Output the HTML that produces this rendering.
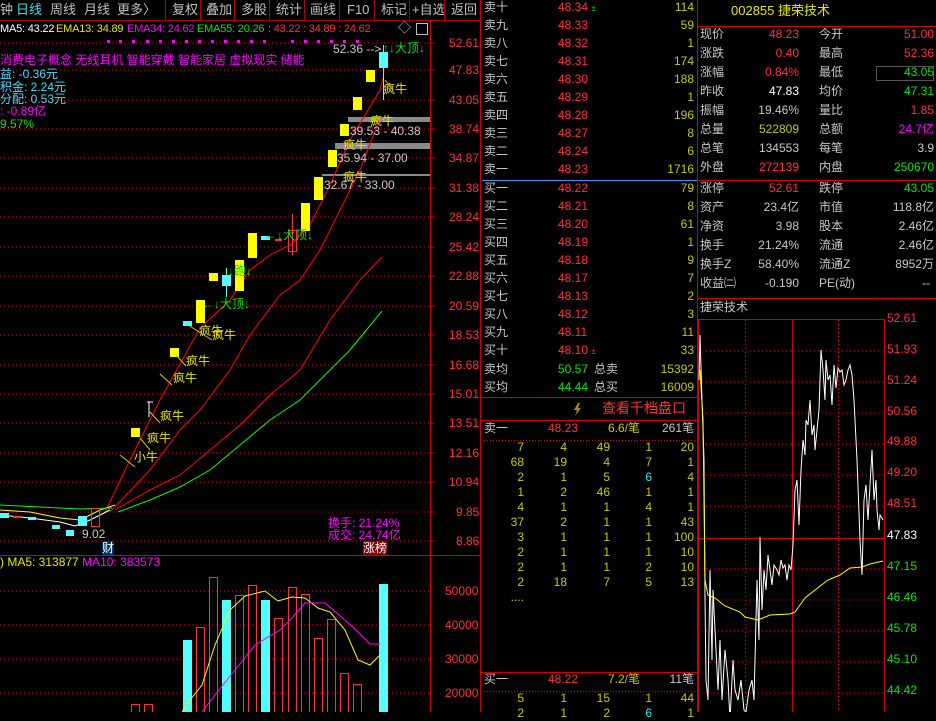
<!DOCTYPE html>
<html><head><meta charset="utf-8"><style>
*{margin:0;padding:0}
body{width:936px;height:712px;background:#000;overflow:hidden;position:relative;font-family:"Liberation Sans","Noto Sans CJK SC",sans-serif;font-size:12px}
.a{position:absolute;white-space:nowrap;line-height:14px}
.r{color:#ff3232}.y{color:#e6e600}.w{color:#c8c8c8}.g{color:#00e600}.c{color:#40e0ff}.m{color:#ff00ff}.yl{color:#c8c800}
.tb{position:absolute;top:0;height:20px;line-height:20px;color:#c0c0c0;font-size:13px}
.sep{position:absolute;top:0;width:1px;height:20px;background:#a00}
.rt{text-align:right}
.ma{position:absolute;top:22px;line-height:14px;white-space:nowrap;font-size:11px;letter-spacing:-0.2px}
</style></head><body>
<div class="tb" style="left:0">钟</div>
<div class="tb c" style="left:16px;color:#40e0e0">日线</div>
<div class="tb" style="left:50px">周线</div>
<div class="tb" style="left:84px">月线</div>
<div class="tb" style="left:117px">更多〉</div>
<div class="sep" style="left:165px"></div>
<div class="tb" style="left:172px">复权</div><div class="sep" style="left:200px"></div>
<div class="tb" style="left:206px">叠加</div><div class="sep" style="left:234px"></div>
<div class="tb" style="left:241px">多股</div><div class="sep" style="left:269px"></div>
<div class="tb" style="left:276px">统计</div><div class="sep" style="left:304px"></div>
<div class="tb" style="left:310px">画线</div><div class="sep" style="left:339px"></div>
<div class="tb" style="left:347px">F10</div><div class="sep" style="left:374px"></div>
<div class="tb" style="left:381px">标记</div><div class="sep" style="left:409px"></div>
<div class="tb" style="left:412px">+自选</div><div class="sep" style="left:444px"></div>
<div class="tb" style="left:451px">返回</div>
<div style="position:absolute;left:0;top:20px;width:480px;height:1px;background:#a00"></div>

<svg width="936" height="712" style="position:absolute;left:0;top:0">
<line x1="430.5" y1="20" x2="430.5" y2="712" stroke="#c00"/>
<line x1="480.5" y1="0" x2="480.5" y2="712" stroke="#c00"/>
<line x1="0" y1="555.5" x2="480" y2="555.5" stroke="#c00"/>
<line x1="697.5" y1="0" x2="697.5" y2="712" stroke="#c00"/>
<g stroke="#c00" stroke-dasharray="1,3">
<line x1="0" y1="43" x2="430" y2="43"/><line x1="0" y1="70" x2="430" y2="70"/><line x1="0" y1="100" x2="430" y2="100"/><line x1="0" y1="129" x2="430" y2="129"/><line x1="0" y1="158" x2="430" y2="158"/><line x1="0" y1="188" x2="430" y2="188"/><line x1="0" y1="217" x2="430" y2="217"/><line x1="0" y1="247" x2="430" y2="247"/><line x1="0" y1="276" x2="430" y2="276"/><line x1="0" y1="306" x2="430" y2="306"/><line x1="0" y1="335" x2="430" y2="335"/><line x1="0" y1="365" x2="430" y2="365"/><line x1="0" y1="394" x2="430" y2="394"/><line x1="0" y1="423" x2="430" y2="423"/><line x1="0" y1="453" x2="430" y2="453"/><line x1="0" y1="482" x2="430" y2="482"/><line x1="0" y1="512" x2="430" y2="512"/><line x1="0" y1="541" x2="430" y2="541"/>
<line x1="0" y1="591" x2="430" y2="591"/><line x1="0" y1="625" x2="430" y2="625"/><line x1="0" y1="659" x2="430" y2="659"/><line x1="0" y1="693" x2="430" y2="693"/>
</g>
<g stroke="#c00"><line x1="430" y1="43" x2="435" y2="43"/><line x1="430" y1="70" x2="435" y2="70"/><line x1="430" y1="100" x2="435" y2="100"/><line x1="430" y1="129" x2="435" y2="129"/><line x1="430" y1="158" x2="435" y2="158"/><line x1="430" y1="188" x2="435" y2="188"/><line x1="430" y1="217" x2="435" y2="217"/><line x1="430" y1="247" x2="435" y2="247"/><line x1="430" y1="276" x2="435" y2="276"/><line x1="430" y1="306" x2="435" y2="306"/><line x1="430" y1="335" x2="435" y2="335"/><line x1="430" y1="365" x2="435" y2="365"/><line x1="430" y1="394" x2="435" y2="394"/><line x1="430" y1="423" x2="435" y2="423"/><line x1="430" y1="453" x2="435" y2="453"/><line x1="430" y1="482" x2="435" y2="482"/><line x1="430" y1="512" x2="435" y2="512"/><line x1="430" y1="541" x2="435" y2="541"/></g>
<g fill="#f0f">
<rect x="107" y="40" width="3" height="3"/><rect x="119" y="40" width="3" height="3"/><rect x="132" y="40" width="3" height="3"/><rect x="146" y="40" width="3" height="3"/><rect x="159" y="40" width="3" height="3"/><rect x="172" y="40" width="3" height="3"/><rect x="185" y="40" width="3" height="3"/><rect x="198" y="40" width="3" height="3"/><rect x="211" y="40" width="3" height="3"/><rect x="224" y="40" width="3" height="3"/><rect x="237" y="40" width="3" height="3"/><rect x="250" y="40" width="3" height="3"/><rect x="263" y="40" width="3" height="3"/><rect x="291" y="40" width="3" height="3"/><rect x="304" y="40" width="3" height="3"/><rect x="317" y="40" width="3" height="3"/><rect x="330" y="40" width="3" height="3"/><rect x="343" y="40" width="3" height="3"/><rect x="356" y="40" width="3" height="3"/>
</g>
<rect x="348" y="117" width="82" height="5" fill="#8a8a8a"/>
<rect x="335" y="143" width="95" height="6" fill="#8a8a8a"/>
<rect x="322" y="174" width="108" height="2" fill="#8a8a8a"/>
<polyline fill="none" stroke="#f00" points="105,512 130,460 160,400 200,328 230,300 250,270 270,255 290,245 310,225 330,185 350,140 380,90 383,78"/>
<polyline fill="none" stroke="#f00" points="110,512 150,470 180,430 200,410 230,370 250,335 280,295 300,280 320,250 340,210 360,170 380,118"/>
<polyline fill="none" stroke="#f00" points="115,510 150,490 180,475 210,450 240,425 270,395 300,370 330,320 360,280 382,257"/>
<polyline fill="none" stroke="#0f0" points="118,512 150,500 180,487 210,470 240,445 270,420 300,400 320,380 350,350 382,311"/>
<polyline fill="none" stroke="#ff0" points="0,510 30,512 60,518 80,520 100,510 115,505"/>
<polyline fill="none" stroke="#fff" points="0,515 30,518 60,522 75,526 90,520 110,510"/>
<polyline fill="none" stroke="#0f0" points="0,505 40,507 80,509 112,508"/>
<g fill="#ff0">
<rect x="328" y="150" width="9" height="17"/><rect x="314" y="177" width="9" height="23"/><rect x="301" y="203" width="9" height="28"/>
<rect x="248" y="233" width="9" height="25"/><rect x="235" y="260" width="9" height="31"/><rect x="209" y="273" width="9" height="8"/>
<rect x="196" y="300" width="9" height="23"/><rect x="170" y="348" width="9" height="9"/><rect x="131" y="428" width="9" height="9"/>
<rect x="366" y="70" width="9" height="12"/><rect x="353" y="97" width="9" height="13"/><rect x="340" y="124" width="9" height="12"/>
</g>
<g fill="#5ff">
<rect x="379" y="52" width="9" height="16"/><rect x="222" y="275" width="9" height="11"/><rect x="261" y="236" width="9" height="4"/><rect x="183" y="321" width="9" height="5"/>
<rect x="78" y="516" width="9" height="10"/><rect x="66" y="530" width="8" height="6"/><rect x="52" y="525" width="8" height="4"/><rect x="0" y="513" width="9" height="5"/><rect x="28" y="517" width="8" height="3"/>
</g>
<line x1="383.5" y1="45" x2="383.5" y2="100" stroke="#5ff"/>
<line x1="226.5" y1="268" x2="226.5" y2="297" stroke="#5ff"/>
<rect x="288.5" y="230.5" width="8" height="21" fill="none" stroke="#f33"/>
<line x1="292.5" y1="214" x2="292.5" y2="255" stroke="#f33"/>
<rect x="275" y="239" width="7" height="2" fill="#f33"/>
<rect x="91.5" y="508.5" width="8" height="18" fill="none" stroke="#f33"/>
<rect x="13" y="516" width="8" height="2" fill="#f33"/>
<g stroke="#cc0" fill="none"><line x1="120" y1="455" x2="135" y2="467"/><line x1="140" y1="438" x2="150" y2="450"/><line x1="150" y1="412" x2="160" y2="423"/><line x1="160" y1="374" x2="172" y2="385"/><line x1="176" y1="355" x2="186" y2="366"/><line x1="188" y1="325" x2="212" y2="340"/><line x1="385" y1="80" x2="393" y2="90"/></g>
<path d="M147 402h6M149 402v15" stroke="#fff" fill="none"/>
<g fill="#5ff"><rect x="183" y="640" width="9" height="72"/><rect x="222" y="600" width="9" height="112"/><rect x="261" y="600" width="9" height="112"/><rect x="379" y="584" width="9" height="128"/></g>
<g fill="none" stroke="#f33"><rect x="131.5" y="704.5" width="8" height="10"/><rect x="144.5" y="704.5" width="8" height="10"/><rect x="196.5" y="627.5" width="8" height="90"/><rect x="209.5" y="577.5" width="8" height="140"/><rect x="235.5" y="595.5" width="8" height="120"/><rect x="248.5" y="585.5" width="8" height="130"/><rect x="274.5" y="618.5" width="8" height="100"/><rect x="288.5" y="587.5" width="8" height="130"/><rect x="301.5" y="594.5" width="8" height="120"/><rect x="314.5" y="638.5" width="8" height="80"/><rect x="327.5" y="619.5" width="8" height="100"/><rect x="340.5" y="673.5" width="8" height="40"/><rect x="353.5" y="684.5" width="8" height="30"/></g>
<polyline fill="none" stroke="#ff0" points="182,712 190,700 202,685 215,645 230,610 245,596 265,591 278,601 292,597 305,598 318,608 330,612 345,630 358,660 370,665 380,655"/>
<polyline fill="none" stroke="#f0f" points="202,712 215,695 235,670 255,645 280,630 292,618 305,603 325,603 345,620 358,632 370,644 380,644"/>
<line x1="482" y1="180.5" x2="697" y2="180.5" stroke="#39f"/>
<line x1="481" y1="397.5" x2="697" y2="397.5" stroke="#c00"/>
<line x1="481" y1="420.5" x2="697" y2="420.5" stroke="#c00"/>
<line x1="481" y1="672.5" x2="697" y2="672.5" stroke="#c00"/>
<line x1="484" y1="440.5" x2="697" y2="440.5" stroke="#c00" stroke-dasharray="1,2"/>
<line x1="484" y1="691.5" x2="697" y2="691.5" stroke="#c00" stroke-dasharray="1,2"/>
<path d="M578 403l-4 7h3l-2 6 6-8h-3l2-5z" fill="#aa8820"/>
<line x1="698" y1="26.5" x2="936" y2="26.5" stroke="#c00"/>
<line x1="698" y1="180.5" x2="936" y2="180.5" stroke="#c00"/>
<line x1="698" y1="298.5" x2="936" y2="298.5" stroke="#c00"/>
<rect x="876.5" y="66.5" width="57" height="14" fill="none" stroke="#555"/>
<rect x="698.5" y="319.5" width="186" height="400" fill="none" stroke="#c00"/>
<line x1="792.5" y1="319" x2="792.5" y2="712" stroke="#c00"/>
<line x1="698" y1="538.5" x2="885" y2="538.5" stroke="#c00"/>
<g stroke="#c00" stroke-dasharray="1,3">
<line x1="698" y1="351" x2="885" y2="351"/><line x1="698" y1="382" x2="885" y2="382"/><line x1="698" y1="413" x2="885" y2="413"/><line x1="698" y1="444" x2="885" y2="444"/><line x1="698" y1="475" x2="885" y2="475"/><line x1="698" y1="506" x2="885" y2="506"/><line x1="698" y1="569" x2="885" y2="569"/><line x1="698" y1="600" x2="885" y2="600"/><line x1="698" y1="631" x2="885" y2="631"/><line x1="698" y1="662" x2="885" y2="662"/><line x1="698" y1="693" x2="885" y2="693"/>
<line x1="745.5" y1="320" x2="745.5" y2="712"/><line x1="838.5" y1="320" x2="838.5" y2="712"/>
</g>
<polyline fill="none" stroke="#fff" points="699,380 700,335 702,400 704,460 705,600 706,680 708,700 710,570 712,660 713,590 715,630 718,690 720,640 722,700 725,650 728,680 730,720 733,660 735,690 738,700 741,680 744,710 746,712 749,690 752,680 754,700 757,580 759,640 760,537 762,610 764,570 766,590 768,555 770,570 772,585 774,565 777,570 779,575 781,560 783,568 785,565 787,580 789,565 791,570 793,545 795,490 797,480 799,525 801,470 803,440 805,455 806,420 808,425 810,400 812,435 814,425 815,450 817,430 819,410 821,350 823,370 825,400 826,360 828,380 830,375 832,405 834,365 836,388 838,368 840,372 842,370 844,385 846,380 848,370 850,365 852,375 854,400 857,460 860,540 862,575 864,500 866,485 868,520 870,485 872,450 874,500 876,480 877,510 879,530 880,515 883,520"/>
<polyline fill="none" stroke="#ff0" points="700,370 703,420 705,580 708,595 715,598 725,606 740,612 745,617 758,620 770,615 790,614 795,612 800,605 805,598 815,590 828,580 840,575 850,568 862,567 870,564 883,561"/>
</svg>

<div class="ma" style="left:0;color:#fff">MA5: 43.22</div>
<div class="ma y" style="left:56px">EMA13: 34.89</div>
<div class="ma m" style="left:127px">EMA34: 24.62</div>
<div class="ma g" style="left:197px">EMA55: 20.26</div>
<div class="ma r" style="left:268px">: 43.22 : 34.89 : 24.62</div>
<div class="a w" style="left:398px;top:21px;font-size:13px">◇</div>
<div class="a" style="left:416px;top:23px;width:10px;height:10px;border:1px solid #bbb"></div>
<div class="a m" style="left:0;top:53px">消费电子概念 无线耳机 智能穿戴 智能家居 虚拟现实 储能</div>
<div class="a c" style="left:0;top:67px">益: -0.36元</div>
<div class="a c" style="left:0;top:80px">积金: 2.24元</div>
<div class="a c" style="left:0;top:92px">分配: 0.53元</div>
<div class="a m" style="left:0;top:104px">: -0.89亿</div>
<div class="a g" style="left:0;top:117px">9.57%</div>
<div class="a w" style="left:333px;top:42px">52.36 --&gt;</div>
<div class="a g" style="left:383px;top:41px">↑↓大顶↓</div>
<div class="a y" style="left:383px;top:82px">疯牛</div>
<div class="a w" style="left:350px;top:124px">39.53 - 40.38</div>
<div class="a y" style="left:370px;top:114px">疯牛</div>
<div class="a y" style="left:343px;top:138px">疯牛</div>
<div class="a w" style="left:337px;top:151px">35.94 - 37.00</div>
<div class="a y" style="left:343px;top:170px">疯牛</div>
<div class="a w" style="left:324px;top:178px">32.67 - 33.00</div>
<div class="a g" style="left:265px;top:228px">←↓大顶↓</div>
<div class="a g" style="left:228px;top:264px">↓跑↓</div>
<div class="a g" style="left:202px;top:297px">←↓大顶↓</div>
<div class="a y" style="left:199px;top:324px">疯牛</div>
<div class="a y" style="left:212px;top:328px">疯牛</div>
<div class="a y" style="left:186px;top:354px">疯牛</div>
<div class="a y" style="left:173px;top:371px">疯牛</div>
<div class="a y" style="left:160px;top:409px">疯牛</div>
<div class="a y" style="left:147px;top:431px">疯牛</div>
<div class="a y" style="left:134px;top:450px">小牛</div>
<div class="a w" style="left:82px;top:527px">9.02</div>
<div class="a" style="left:102px;top:541px;background:#036;color:#fff">财</div>
<div class="a m" style="left:328px;top:516px">换手: 21.24%</div>
<div class="a m" style="left:328px;top:528px">成交: 24.74亿</div>
<div class="a" style="left:363px;top:541px;background:#800;color:#fff">涨榜</div>
<div class="a y" style="left:0;top:555px">) MA5: 313877 <span class="m">MA10: 383573</span></div>
<div class="a r" style="left:449px;top:36px">52.61</div><div class="a r" style="left:449px;top:63px">47.83</div><div class="a r" style="left:449px;top:93px">43.05</div><div class="a r" style="left:449px;top:122px">38.74</div><div class="a r" style="left:449px;top:151px">34.87</div><div class="a r" style="left:449px;top:181px">31.38</div><div class="a r" style="left:449px;top:210px">28.24</div><div class="a r" style="left:449px;top:240px">25.42</div><div class="a r" style="left:449px;top:269px">22.88</div><div class="a r" style="left:449px;top:299px">20.59</div><div class="a r" style="left:449px;top:328px">18.53</div><div class="a r" style="left:449px;top:358px">16.68</div><div class="a r" style="left:449px;top:387px">15.01</div><div class="a r" style="left:449px;top:416px">13.51</div><div class="a r" style="left:449px;top:446px">12.16</div><div class="a r" style="left:449px;top:475px">10.94</div><div class="a r" style="left:456px;top:505px">9.85</div><div class="a r" style="left:456px;top:534px">8.86</div>
<div class="a r" style="left:445px;top:584px">50000</div><div class="a r" style="left:445px;top:618px">40000</div><div class="a r" style="left:445px;top:652px">30000</div><div class="a r" style="left:445px;top:686px">20000</div>

<div style="position:absolute;left:484px;top:0;width:210px">
<div class="a w" style="left:0;top:0">卖十</div><div class="a r" style="left:74px;top:0">48.34 <span class="g" style="font-size:8px">±</span></div><div class="a yl rt" style="right:0;top:0">114</div>
<div class="a w" style="left:0;top:18px">卖九</div><div class="a r" style="left:74px;top:18px">48.33</div><div class="a yl" style="right:0;top:18px">59</div>
<div class="a w" style="left:0;top:36px">卖八</div><div class="a r" style="left:74px;top:36px">48.32</div><div class="a yl" style="right:0;top:36px">1</div>
<div class="a w" style="left:0;top:54px">卖七</div><div class="a r" style="left:74px;top:54px">48.31</div><div class="a yl" style="right:0;top:54px">174</div>
<div class="a w" style="left:0;top:72px">卖六</div><div class="a r" style="left:74px;top:72px">48.30</div><div class="a yl" style="right:0;top:72px">188</div>
<div class="a w" style="left:0;top:90px">卖五</div><div class="a r" style="left:74px;top:90px">48.29</div><div class="a yl" style="right:0;top:90px">1</div>
<div class="a w" style="left:0;top:108px">卖四</div><div class="a r" style="left:74px;top:108px">48.28</div><div class="a yl" style="right:0;top:108px">196</div>
<div class="a w" style="left:0;top:126px">卖三</div><div class="a r" style="left:74px;top:126px">48.27</div><div class="a yl" style="right:0;top:126px">8</div>
<div class="a w" style="left:0;top:144px">卖二</div><div class="a r" style="left:74px;top:144px">48.24</div><div class="a yl" style="right:0;top:144px">6</div>
<div class="a w" style="left:0;top:162px">卖一</div><div class="a r" style="left:74px;top:162px">48.23</div><div class="a yl" style="right:0;top:162px">1716</div>
<div class="a w" style="left:0;top:181px">买一</div><div class="a r" style="left:74px;top:181px">48.22</div><div class="a yl" style="right:0;top:181px">79</div>
<div class="a w" style="left:0;top:199px">买二</div><div class="a r" style="left:74px;top:199px">48.21</div><div class="a yl" style="right:0;top:199px">8</div>
<div class="a w" style="left:0;top:217px">买三</div><div class="a r" style="left:74px;top:217px">48.20</div><div class="a yl" style="right:0;top:217px">61</div>
<div class="a w" style="left:0;top:235px">买四</div><div class="a r" style="left:74px;top:235px">48.19</div><div class="a yl" style="right:0;top:235px">1</div>
<div class="a w" style="left:0;top:253px">买五</div><div class="a r" style="left:74px;top:253px">48.18</div><div class="a yl" style="right:0;top:253px">9</div>
<div class="a w" style="left:0;top:271px">买六</div><div class="a r" style="left:74px;top:271px">48.17</div><div class="a yl" style="right:0;top:271px">7</div>
<div class="a w" style="left:0;top:289px">买七</div><div class="a r" style="left:74px;top:289px">48.13</div><div class="a yl" style="right:0;top:289px">2</div>
<div class="a w" style="left:0;top:307px">买八</div><div class="a r" style="left:74px;top:307px">48.12</div><div class="a yl" style="right:0;top:307px">3</div>
<div class="a w" style="left:0;top:325px">买九</div><div class="a r" style="left:74px;top:325px">48.11</div><div class="a yl" style="right:0;top:325px">11</div>
<div class="a w" style="left:0;top:343px">买十</div><div class="a r" style="left:74px;top:343px">48.10 <span style="font-size:8px">±</span></div><div class="a yl" style="right:0;top:343px">33</div>
<div class="a w" style="left:0;top:362px">卖均</div><div class="a g" style="left:74px;top:362px">50.57</div><div class="a w" style="left:110px;top:362px">总卖</div><div class="a yl" style="right:0;top:362px">15392</div>
<div class="a w" style="left:0;top:380px">买均</div><div class="a g" style="left:74px;top:380px">44.44</div><div class="a w" style="left:110px;top:380px">总买</div><div class="a yl" style="right:0;top:380px">16009</div>
<div class="a r" style="left:118px;top:401px;font-size:14px">查看千档盘口</div>
<div class="a w" style="left:0;top:421px">卖一</div><div class="a r" style="left:64px;top:421px">48.23</div><div class="a yl" style="left:124px;top:421px">6.6/笔</div><div class="a w" style="right:0;top:421px">261笔</div>
<div class="a w" style="left:0;top:672px">买一</div><div class="a r" style="left:64px;top:672px">48.22</div><div class="a yl" style="left:124px;top:672px">7.2/笔</div><div class="a w" style="right:0;top:672px">11笔</div>
</div>
<div style="position:absolute;left:484px;top:440px;width:210px;color:#c8c800;line-height:15px">
<table style="border-collapse:collapse;width:210px;font-size:12px;color:#c8c800;text-align:right" cellpadding="0">
<tr><td style="width:40px">7</td><td style="width:43px">4</td><td style="width:43px">49</td><td style="width:42px">1</td><td>20</td></tr>
<tr><td>68</td><td>19</td><td>4</td><td>7</td><td>1</td></tr>
<tr><td>2</td><td>1</td><td>5</td><td class="c">6</td><td>4</td></tr>
<tr><td>1</td><td>2</td><td>46</td><td>1</td><td>1</td></tr>
<tr><td>4</td><td>1</td><td>1</td><td>4</td><td>1</td></tr>
<tr><td>37</td><td>2</td><td>1</td><td>1</td><td>43</td></tr>
<tr><td>3</td><td>1</td><td>1</td><td>1</td><td>100</td></tr>
<tr><td>2</td><td>1</td><td>1</td><td>1</td><td>10</td></tr>
<tr><td>2</td><td>1</td><td>1</td><td>2</td><td>10</td></tr>
<tr><td>2</td><td>18</td><td>7</td><td>5</td><td>13</td></tr>
<tr><td>....</td><td></td><td></td><td></td><td></td></tr>
</table></div>
<div style="position:absolute;left:484px;top:691px;width:210px">
<table style="border-collapse:collapse;width:210px;font-size:12px;color:#c8c800;text-align:right;line-height:15px" cellpadding="0">
<tr><td style="width:40px">5</td><td style="width:43px">1</td><td style="width:43px">15</td><td style="width:42px">1</td><td>44</td></tr>
<tr><td>2</td><td>1</td><td>2</td><td class="c">6</td><td>1</td></tr></table></div>

<div class="a y" style="left:731px;top:4px;font-size:13px">002855 捷荣技术</div>
<div style="position:absolute;left:700px;top:0;width:234px">
<div class="a w" style="left:0;top:27px">现价</div><div class="a r" style="right:135px;top:27px">48.23</div><div class="a w" style="left:119px;top:27px">今开</div><div class="a r" style="right:0;top:27px">51.00</div>
<div class="a w" style="left:0;top:46px">涨跌</div><div class="a r" style="right:135px;top:46px">0.40</div><div class="a w" style="left:119px;top:46px">最高</div><div class="a r" style="right:0;top:46px">52.36</div>
<div class="a w" style="left:0;top:65px">涨幅</div><div class="a r" style="right:135px;top:65px">0.84%</div><div class="a w" style="left:119px;top:65px">最低</div><div class="a g" style="right:0;top:65px">43.05</div>
<div class="a w" style="left:0;top:84px">昨收</div><div class="a" style="right:135px;top:84px;color:#fff">47.83</div><div class="a w" style="left:119px;top:84px">均价</div><div class="a g" style="right:0;top:84px">47.31</div>
<div class="a w" style="left:0;top:103px">振幅</div><div class="a w" style="right:135px;top:103px">19.46%</div><div class="a w" style="left:119px;top:103px">量比</div><div class="a r" style="right:0;top:103px">1.85</div>
<div class="a w" style="left:0;top:122px">总量</div><div class="a yl" style="right:135px;top:122px">522809</div><div class="a w" style="left:119px;top:122px">总额</div><div class="a m" style="right:0;top:122px">24.7亿</div>
<div class="a w" style="left:0;top:141px">总笔</div><div class="a w" style="right:135px;top:141px">134553</div><div class="a w" style="left:119px;top:141px">每笔</div><div class="a w" style="right:0;top:141px">3.9</div>
<div class="a w" style="left:0;top:160px">外盘</div><div class="a r" style="right:135px;top:160px">272139</div><div class="a w" style="left:119px;top:160px">内盘</div><div class="a g" style="right:0;top:160px">250670</div>
<div class="a w" style="left:0;top:181px">涨停</div><div class="a r" style="right:135px;top:181px">52.61</div><div class="a w" style="left:119px;top:181px">跌停</div><div class="a g" style="right:0;top:181px">43.05</div>
<div class="a w" style="left:0;top:200px">资产</div><div class="a w" style="right:135px;top:200px">23.4亿</div><div class="a w" style="left:119px;top:200px">市值</div><div class="a w" style="right:0;top:200px">118.8亿</div>
<div class="a w" style="left:0;top:219px">净资</div><div class="a w" style="right:135px;top:219px">3.98</div><div class="a w" style="left:119px;top:219px">股本</div><div class="a w" style="right:0;top:219px">2.46亿</div>
<div class="a w" style="left:0;top:238px">换手</div><div class="a w" style="right:135px;top:238px">21.24%</div><div class="a w" style="left:119px;top:238px">流通</div><div class="a w" style="right:0;top:238px">2.46亿</div>
<div class="a w" style="left:0;top:257px">换手Z</div><div class="a w" style="right:135px;top:257px">58.40%</div><div class="a w" style="left:119px;top:257px">流通Z</div><div class="a w" style="right:0;top:257px">8952万</div>
<div class="a w" style="left:0;top:276px">收益㈡</div><div class="a w" style="right:135px;top:276px">-0.190</div><div class="a w" style="left:119px;top:276px">PE(动)</div><div class="a w" style="right:4px;top:276px">--</div>
<div class="a w" style="left:0;top:300px">捷荣技术</div>
</div>
<div class="a r" style="left:887px;top:311px">52.61</div><div class="a r" style="left:887px;top:342px">51.93</div><div class="a r" style="left:887px;top:373px">51.24</div><div class="a r" style="left:887px;top:404px">50.56</div><div class="a r" style="left:887px;top:434px">49.88</div><div class="a r" style="left:887px;top:465px">49.20</div><div class="a r" style="left:887px;top:496px">48.51</div><div class="a" style="left:887px;top:528px;color:#fff">47.83</div><div class="a g" style="left:887px;top:559px">47.15</div><div class="a g" style="left:887px;top:590px">46.46</div><div class="a g" style="left:887px;top:621px">45.78</div><div class="a g" style="left:887px;top:652px">45.10</div><div class="a g" style="left:887px;top:683px">44.42</div>
</body></html>
